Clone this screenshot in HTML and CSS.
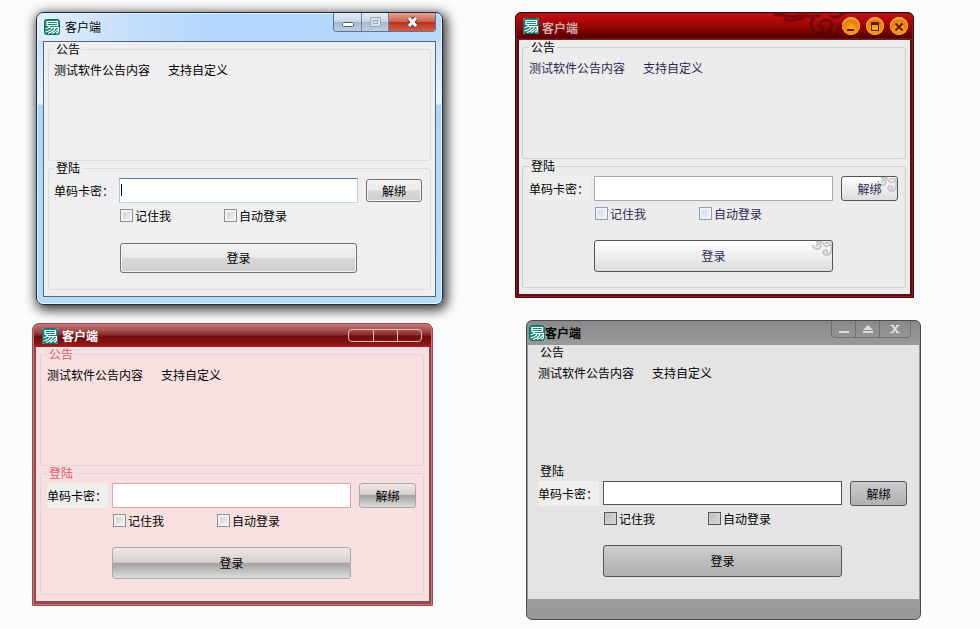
FILE: index.html
```
<!DOCTYPE html>
<html lang="zh-CN">
<head>
  <meta charset="UTF-8">
  <meta name="viewport" content="width=device-width, initial-scale=1.0">
  <title>客户端</title>
  <link rel="stylesheet" href="styles.css">
</head>
<body>
  <svg class="defs" width="0" height="0" aria-hidden="true">
    <symbol id="logo" viewBox="0 0 16 16">
      <rect width="16" height="16" rx="2" fill="#d5eeeb"/>
      <rect x="0.5" y="0.5" width="15" height="15" rx="2" fill="#16857d" stroke="#0b756d"/>
      <path d="M3 2.500H13.500V6.500H3ZM3 4.500H13.500M1.500 10C4 9.500 5 8.500 5.500 7M4.500 8.500H14.500V11.500Q14.500 14 12 14M1.500 13Q6.500 12 8.500 8.500M4 14.500Q9.500 13 11.500 8.500M8 14.500Q11.500 13.500 14 10" fill="none" stroke="#fff" stroke-width="1.200"/>
    </symbol>
    <symbol id="swirl" viewBox="0 0 20 16">
      <path d="M1 4C1 8 6 9 8 7C10 5 8 2 6 3C4 4 5 5 6 5M4 1C9 0 11 1 12 4C13 6 17 6 18 3M18 1C20 7 20 14 15 14C11 14 10 10 13 9C16 9 16 12 14 12M13 1Q14 3 17 1" fill="none" stroke="#c8c8c8" stroke-width="2"/>
    </symbol>
  </svg>

  <main class="desktop">
    <!-- Aero -->
    <section class="window aero">
      <header class="titlebar">
        <svg class="logo"><use href="#logo"/></svg>
        <h2>客户端</h2>
        <div class="controls">
          <button type="button" aria-label="最小化"><svg width="27" height="19"><rect x="8.500" y="9.500" width="11" height="4" rx="1" fill="#fff" stroke="#535a6d"/></svg></button>
          <button type="button" aria-label="最大化"><svg width="26" height="19"><path d="M8.500 4.500h10v9h-10zM11.500 7.500h4v3h-4z" fill="#d3dfec" stroke="#98a7ba"/></svg></button>
          <button type="button" class="close" aria-label="关闭"><svg width="46" height="19"><path d="M20 5l7 8M27 5l-7 8" stroke="#5c4048" stroke-width="5"/><path d="M20 5l7 8M27 5l-7 8" stroke="#fff" stroke-width="3"/></svg></button>
        </div>
      </header>
      <form class="client">
        <fieldset class="notice">
          <legend>公告</legend>
          <p><span>测试软件公告内容</span><span>支持自定义</span></p>
        </fieldset>
        <fieldset class="login">
          <legend>登陆</legend>
          <div class="row">
            <label for="card1">单码卡密：</label>
            <input type="text" id="card1">
            <button type="button" class="btn">解绑</button>
          </div>
          <div class="checks">
            <label><input type="checkbox">记住我</label>
            <label><input type="checkbox">自动登录</label>
          </div>
          <button type="button" class="btn submit">登录</button>
        </fieldset>
      </form>
    </section>

    <!-- Red with clouds -->
    <section class="window cloud">
      <header class="titlebar">
        <svg class="logo"><use href="#logo"/></svg>
        <h2>客户端</h2>
        <svg class="ornament" width="72" height="26" viewBox="0 0 72 26" fill="none" stroke="#3f0808" stroke-width="3">
          <path d="M0 2C10 1 14 5 22 3C30 1 38 6 46 2M10 6C18 9 24 6 30 5M40 4C34 12 38 20 48 20C60 20 61 8 53 7C45 7 44 15 50 15M56 3C62 6 66 4 70 0M60 24C64 20 62 14 68 12"/>
        </svg>
        <div class="controls">
          <button type="button" aria-label="最小化"><svg width="18" height="18"><path d="M5 13h7" stroke="#6b1500" stroke-width="2"/></svg></button>
          <button type="button" aria-label="最大化"><svg width="18" height="18"><path d="M5.500 6v7.500h7V6" fill="none" stroke="#6b1500"/><path d="M5 6.500h8" stroke="#6b1500" stroke-width="3"/></svg></button>
          <button type="button" aria-label="关闭"><svg width="18" height="18"><path d="M5.500 6.500l7 7M12.500 6.500l-7 7" stroke="#6b1500" stroke-width="2"/></svg></button>
        </div>
      </header>
      <form class="client">
        <fieldset class="notice">
          <legend>公告</legend>
          <p><span>测试软件公告内容</span><span>支持自定义</span></p>
        </fieldset>
        <fieldset class="login">
          <legend>登陆</legend>
          <div class="row">
            <label for="card2">单码卡密：</label>
            <input type="text" id="card2">
            <button type="button" class="btn"><svg class="swirl"><use href="#swirl"/></svg><span>解绑</span></button>
          </div>
          <div class="checks">
            <label><input type="checkbox">记住我</label>
            <label><input type="checkbox">自动登录</label>
          </div>
          <button type="button" class="btn submit"><svg class="swirl"><use href="#swirl"/></svg><span>登录</span></button>
        </fieldset>
      </form>
    </section>

    <!-- Pink -->
    <section class="window pink">
      <header class="titlebar">
        <svg class="logo"><use href="#logo"/></svg>
        <h2>客户端</h2>
        <div class="controls">
          <button type="button" aria-label="最小化"></button>
          <button type="button" aria-label="最大化"></button>
          <button type="button" aria-label="关闭"></button>
        </div>
      </header>
      <form class="client">
        <fieldset class="notice">
          <legend>公告</legend>
          <p><span>测试软件公告内容</span><span>支持自定义</span></p>
        </fieldset>
        <fieldset class="login">
          <legend>登陆</legend>
          <div class="row">
            <label for="card3">单码卡密：</label>
            <input type="text" id="card3">
            <button type="button" class="btn">解绑</button>
          </div>
          <div class="checks">
            <label><input type="checkbox">记住我</label>
            <label><input type="checkbox">自动登录</label>
          </div>
          <button type="button" class="btn submit">登录</button>
        </fieldset>
      </form>
    </section>

    <!-- Gray -->
    <section class="window gray">
      <header class="titlebar">
        <svg class="logo"><use href="#logo"/></svg>
        <h2>客户端</h2>
        <div class="controls">
          <button type="button" aria-label="最小化"><svg width="23" height="16"><path d="M7 11h10" stroke="#ddd" stroke-width="2"/></svg></button>
          <button type="button" aria-label="最大化"><svg width="23" height="16"><path d="M12 4l5 5H7zM7 10h10v2H7z" fill="#ddd"/></svg></button>
          <button type="button" class="close" aria-label="关闭"><svg width="30" height="16"><path d="M12 4l6 8M18 4l-6 8" stroke="#ddd" stroke-width="2"/><path d="M10 4.500h4M16 4.500h4M10 11.500h4M16 11.500h4" stroke="#ddd"/></svg></button>
        </div>
      </header>
      <form class="client">
        <fieldset class="notice">
          <legend>公告</legend>
          <p><span>测试软件公告内容</span><span>支持自定义</span></p>
        </fieldset>
        <fieldset class="login">
          <legend>登陆</legend>
          <div class="row">
            <label for="card4">单码卡密：</label>
            <input type="text" id="card4">
            <button type="button" class="btn">解绑</button>
          </div>
          <div class="checks">
            <label><input type="checkbox">记住我</label>
            <label><input type="checkbox">自动登录</label>
          </div>
          <button type="button" class="btn submit">登录</button>
        </fieldset>
      </form>
    </section>
  </main>
</body>
</html>
```
FILE: styles.css
```
* {
  box-sizing: border-box;
}
body {
  margin: 0;
  background: #fcfcfc;
  color: #000;
  font-family: "Noto Sans CJK SC", sans-serif;
  font-size: 12px;
  line-height: 14px;
}
button, input {
  font: inherit;
  color: inherit;
}
button {
  padding: 0;
}
svg {
  display: block;
}
.defs {
  position: absolute;
}
.desktop {
  position: relative;
  min-height: 100vh;
}

/* window frame */
.window {
  position: absolute;
}
.titlebar {
  display: flex;
  align-items: flex-start;
}
.titlebar h2 {
  margin: 0;
  font-size: 12px;
  line-height: 16px;
}
.logo {
  width: 16px;
  height: 16px;
}
.controls {
  display: flex;
  margin-left: auto;
}
.controls button {
  border: 0;
  background: none;
}

/* window content */
.client {
  padding: 0 4px;
  height: 254px;
}
fieldset {
  margin: 0;
  min-width: 0;
  padding: 0 7px 0 6px;
  border: 1px solid #d5dfe5;
  border-radius: 3px;
}
legend {
  padding: 0 2px;
  height: 14px;
}
.notice {
  height: 119px;
}
.notice p {
  display: flex;
  gap: 18px;
  margin: 7px 0 0;
}
.login {
  height: 129px;
}
.row {
  display: grid;
  grid-template-columns: 57px 1fr 57px;
  column-gap: 8px;
  height: 25px;
  margin-top: 3px;
}
.row label {
  line-height: 25px;
  white-space: nowrap;
  background: #efefef;
  width: 61px;
}
.row input {
  min-width: 0;
  width: 100%;
  padding: 0 3px;
  border: 1px solid #a9a9a9;
  background: #fff;
}
.checks {
  display: flex;
  margin: 6px 0 0 66px;
}
.checks label {
  display: flex;
  align-items: center;
  gap: 2px;
  width: 104px;
  height: 13px;
}
.checks input {
  appearance: none;
  width: 13px;
  height: 13px;
  margin: 0;
  border: 1px solid #8e8f8f;
  background: linear-gradient(135deg, #c8ccd0, #f6f6f6);
  box-shadow: inset 0 0 0 2px #f1f1f1;
}
.btn {
  position: relative;
  border: 1px solid #707070;
  border-radius: 3px;
}
.submit {
  display: block;
  width: calc(100% - 130px);
  height: 32px;
  margin: 20px 0 0 65px;
}

/* aero */
.aero {
  left: 36px;
  top: 12px;
  width: 407px;
  padding: 0 6px 7px;
  border: 1px solid #1e2b38;
  border-radius: 7px;
  background:
    linear-gradient(90deg, #e3effc, #c6dffb 22%, #b2d6fd 45%, #b8d9fd) 0 0 / 100% 28px no-repeat,
    linear-gradient(#b9d8fa, #edf6ff 91px, #b0d5fb 92px, #b8dcfd);
  box-shadow: inset 0 0 0 1px #e4f4ff, 2px 3px 12px 2px rgba(0, 0, 0, 0.8);
}
.aero .titlebar {
  height: 28px;
}
.aero .logo {
  margin: 6px 5px 0 1px;
}
.aero h2 {
  margin-top: 6px;
  font-weight: 400;
}
.aero .client {
  height: 256px;
  border: 1px solid #53677a;
  background: #efefef;
}
.aero fieldset {
  padding-left: 5px;
}
.aero .controls {
  height: 19px;
  border: 1px solid #60708a;
  border-top: 0;
  border-radius: 0 0 4px 4px;
  overflow: hidden;
}
.aero .controls button {
  background: linear-gradient(#e3edf8, #c8d6e7 47%, #a5b7cc 50%, #bdd0e3);
}
.aero .controls button + button {
  border-left: 1px solid #718199;
}
.aero .controls .close {
  background: linear-gradient(#e6a397, #d06450 47%, #bb3019 50%, #d0604a);
}
.aero .row input {
  border-color: #4d7f9f #b5cfe7 #c0d8ec #a6c8dd;
  /* caret */
  background: linear-gradient(#000, #000) 1px 5px / 1px 12px no-repeat #fff;
}
.aero .btn {
  background: linear-gradient(#f3f3f3, #e9e9e9 48%, #d9d9d9 52%, #cecece);
  box-shadow: inset 0 0 0 1px #f4f4f4;
}
.aero .row .btn {
  margin: 1px 1px 1px 0;
}
.aero .submit {
  width: calc(100% - 132px);
  height: 30px;
  margin: 21px 0 0 66px;
}

/* red with clouds */
.cloud {
  left: 515px;
  top: 12px;
  width: 399px;
  padding: 0 3px 3px;
  border: 1px solid #4f0509;
  border-radius: 6px 6px 0 0;
  background:
    linear-gradient(#c31212, #b30909 7px, #720000 20px, #510000 25px, #7a2020 26px) 0 0 / 100% 27px no-repeat,
    #5c0c13;
  box-shadow: inset 0 0 0 1px #831a22;
}
.cloud .titlebar {
  height: 27px;
}
.cloud .logo {
  margin: 5px 3px 0 4px;
}
.cloud h2 {
  margin-top: 7px;
  color: #cba9a5;
}
.cloud .ornament {
  margin-left: auto;
  opacity: 0.5;
}
.cloud .controls {
  gap: 6px;
  margin: 4px 2px 0 -4px;
}
.cloud .controls button {
  border-radius: 50%;
  background: radial-gradient(circle at 50% 65%, #ffb423, #e87b06 55%, #f9a445 70%);
  box-shadow: inset 0 0 0 1px #f8a653;
}
.cloud .client {
  padding-left: 3px;
  background: #ececec;
}
.cloud fieldset {
  border-color: #cfd2cc #e5c2c2 #cfd2cc #cccfce;
}
.cloud p,
.cloud .checks,
.cloud .btn {
  color: #2c2853;
}
.cloud .checks input {
  border-color: #8c9eaf;
  background: linear-gradient(135deg, #c9d8e7, #f0f4f8);
}
.cloud .btn {
  border-color: #555;
  background: linear-gradient(#fff, #f1f1f1 40%, #dcdcdc);
}
.cloud .btn span {
  position: relative;
}
.swirl {
  position: absolute;
  right: 0;
  top: 0;
  width: 20px;
  height: 16px;
}

/* pink */
.pink {
  left: 32px;
  top: 323px;
  width: 401px;
  padding: 0 3px 4px;
  border: 1px solid #a5444b;
  border-radius: 7px 7px 0 0;
  background:
    linear-gradient(#b98080, #a85050 6px, #8b2929 11px, #730e0e 12px, #811113 18px, #a51d20 22px) 0 0 / 100% 23px no-repeat,
    #8f4a50;
  box-shadow: inset 0 0 0 1px #c0777b;
}
.pink .titlebar {
  height: 23px;
}
.pink .logo {
  margin: 4px 4px 0 6px;
}
.pink h2 {
  margin-top: 4px;
  color: #fff;
}
.pink .controls {
  margin: 5px 7px 0 auto;
  border: 1px solid #dcc2b8;
  border-radius: 4px;
  height: 13px;
}
.pink .controls button {
  width: 24px;
}
.pink .controls button + button {
  border-left: 1px solid #dcc2b8;
}
.pink .client {
  padding-right: 5px;
  background: #f8e0e0;
}
.pink fieldset {
  border-color: #ddd5d8;
}
.pink legend {
  color: #d8606e;
}
.pink .row input {
  border-color: #f49da5;
}
.pink .btn {
  border-color: #b0a5a7;
  background: linear-gradient(#f1e7e7, #d9cdce 48%, #9fa09f 50%, #dedede);
}

/* gray */
.gray {
  left: 526px;
  top: 320px;
  width: 395px;
  padding: 0 1px 20px;
  border: 1px solid #4b4b4b;
  border-radius: 6px;
  background: linear-gradient(#8a8a8a, #999 24px, #9a9a9a 280px, #999);
}
.gray .titlebar {
  height: 24px;
}
.gray .logo {
  margin: 4px 0 0 1px;
}
.gray h2 {
  margin-top: 4px;
}
.gray .controls {
  margin-right: 8px;
  height: 17px;
  border: 1px solid #707070;
  border-top: 0;
  border-radius: 0 0 4px 4px;
}
.gray .controls button + button {
  border-left: 1px solid #707070;
}
.gray .client {
  padding: 0 4px 0 3px;
  background: #e4e4e4;
}
.gray fieldset {
  border-color: transparent;
}
.gray .row input {
  height: 24px;
  border-color: #555;
}
.gray .checks input {
  border-color: #555;
  background: linear-gradient(135deg, #bcbcbc, #d8d8d8);
  box-shadow: inset 0 0 0 1px #d0d0d0;
}
.gray .btn {
  border-color: #555;
  background: linear-gradient(#ccc, #b0b0b0);
}
```
